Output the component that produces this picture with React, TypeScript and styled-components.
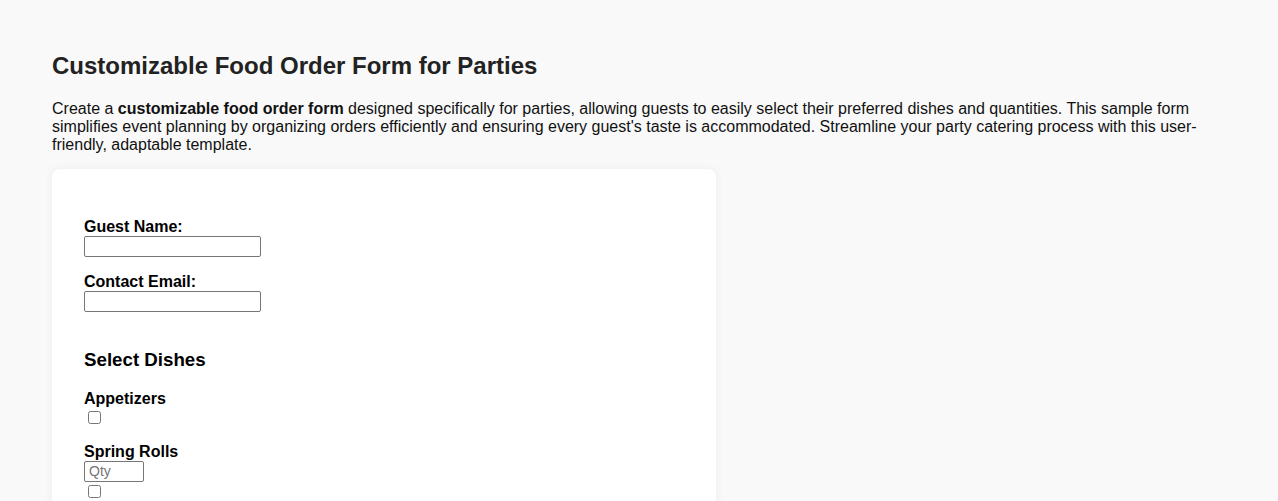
import React from "react";
import styled, { createGlobalStyle } from "styled-components";

const GlobalStyle = createGlobalStyle`
  html, body {
    margin: 0;
    padding: 0;
    background-color: #f9f9f9;
    font-family: "Liberation Sans", Arial, sans-serif;
    color: #222;
  }
`;

const Page = styled.div`
  padding: 32px 52px;
`;

const Title = styled.h2`
  font-size: 24px;
  font-weight: bold;
  color: #222;
  margin: 20px 0 20px;
`;

const Intro = styled.p`
  font-size: 16px;
  margin: 0 0 15px;
  color: #111;
`;

const Card = styled.div`
  max-width: 600px;
  padding: 32px;
  background-color: #fff;
  border-radius: 8px;
  box-shadow: 0 0 8px rgba(0, 0, 0, 0.06);
`;

const Form = styled.form`
  display: flow-root;
  padding-top: 1px;
  color: #000;
`;

const FieldGroup = styled.div`
  margin: 16px 0;
`;

const Label = styled.label`
  display: block;
  font-size: 16px;
  font-weight: bold;
`;

const TextInput = styled.input<{ $width?: number }>`
  display: block;
  box-sizing: border-box;
  width: ${(p) => p.$width ?? 177}px;
  height: 21px;
  margin: 0;
  padding: 1px 4px;
  border: 1px solid #767676;
  border-radius: 2px;
  background: #fff;
  font-family: "Liberation Sans", Arial, sans-serif;
  font-size: 14px;

  &::placeholder {
    color: #757575;
  }
`;

const SectionTitle = styled.h3`
  font-size: 18.72px;
  font-weight: bold;
  margin: 37px 0 18.72px;
`;

const Category = styled.div`
  font-size: 16px;
  font-weight: bold;
`;

const Checkbox = styled.input`
  display: block;
  width: 13px;
  height: 13px;
  margin: 3px 3px 3px 4px;
`;

const DishName = styled.label`
  display: block;
  margin-top: 19px;
  font-size: 16px;
  font-weight: bold;
`;

interface Dish {
  name: string;
}

const appetizers: Dish[] = [
  { name: "Spring Rolls" },
  { name: "Bruschetta" },
];

const DishItem: React.FC<{ dish: Dish }> = ({ dish }) => (
  <div>
    <DishName>{dish.name}</DishName>
    <TextInput type="number" placeholder="Qty" $width={60} />
    <Checkbox type="checkbox" />
  </div>
);

export default function App() {
  return (
    <>
      <GlobalStyle />
      <Page>
        <Title>Customizable Food Order Form for Parties</Title>
        <Intro>
          Create a <strong>customizable food order form</strong> designed
          specifically for parties, allowing guests to easily select their
          preferred dishes and quantities. This sample form simplifies event
          planning by organizing orders efficiently and ensuring every guest's
          taste is accommodated. Streamline your party catering process with
          this user-friendly, adaptable template.
        </Intro>
        <Card>
          <Form>
            <FieldGroup>
              <Label htmlFor="guest-name">Guest Name:</Label>
              <TextInput id="guest-name" type="text" />
            </FieldGroup>
            <FieldGroup>
              <Label htmlFor="guest-email">Contact Email:</Label>
              <TextInput id="guest-email" type="email" />
            </FieldGroup>

            <SectionTitle>Select Dishes</SectionTitle>
            <Category>Appetizers</Category>
            <Checkbox type="checkbox" />
            {appetizers.map((dish) => (
              <DishItem key={dish.name} dish={dish} />
            ))}
          </Form>
        </Card>
      </Page>
    </>
  );
}
